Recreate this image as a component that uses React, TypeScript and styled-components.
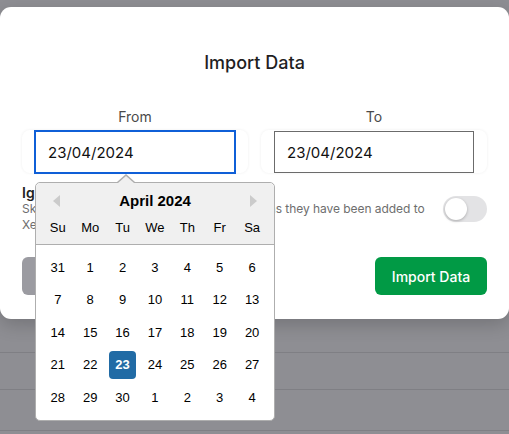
import styled, { createGlobalStyle } from "styled-components";

const GlobalStyle = createGlobalStyle`
  html, body {
    margin: 0;
    padding: 0;
  }
  body {
    background: #8e8e93;
    font-family: Inter, "Noto Sans", sans-serif;
  }
`;

const WEEKDAYS = ["Su", "Mo", "Tu", "We", "Th", "Fr", "Sa"];

const WEEKS: number[][] = [
  [31, 1, 2, 3, 4, 5, 6],
  [7, 8, 9, 10, 11, 12, 13],
  [14, 15, 16, 17, 18, 19, 20],
  [21, 22, 23, 24, 25, 26, 27],
  [28, 29, 30, 1, 2, 3, 4],
];

const SELECTED_ROW = 3;
const SELECTED_DAY = 23;

const DatePicker = () => (
  <Popup>
    <PickerHeader>
      <NavRow>
        <NavArrow $dir="left" />
        <MonthTitle>April 2024</MonthTitle>
        <NavArrow $dir="right" />
      </NavRow>
      <DayGrid>
        {WEEKDAYS.map((d) => (
          <DayName key={d}>{d}</DayName>
        ))}
      </DayGrid>
    </PickerHeader>
    <MonthBody>
      {WEEKS.map((week, wi) =>
        week.map((day, di) => (
          <Day
            key={`${wi}-${di}`}
            $selected={wi === SELECTED_ROW && day === SELECTED_DAY}
          >
            {day}
          </Day>
        ))
      )}
    </MonthBody>
  </Popup>
);

export default function App() {
  return (
    <>
      <GlobalStyle />
      <Page>
        <Backdrop>
          <BackdropRow $h={36} />
          <BackdropRow $h={36} />
          <BackdropRow $h={40} />
        </Backdrop>

        <Modal>
          <Title>Import Data</Title>

          <DateRow>
            <Field>
              <FieldLabel>From</FieldLabel>
              <FieldCard>
                <InputWrap>
                  <DateInput $focused readOnly value="23/04/2024" />
                  <DatePicker />
                </InputWrap>
              </FieldCard>
            </Field>
            <Field>
              <FieldLabel>To</FieldLabel>
              <FieldCard>
                <InputWrap>
                  <DateInput readOnly value="23/04/2024" />
                </InputWrap>
              </FieldCard>
            </Field>
          </DateRow>

          <SettingRow>
            <SettingText>
              <SettingTitle>Ignore duplicate transactions</SettingTitle>
              <SettingDesc>
                Skip all duplicate transactions in this import as they have been added to Xero
                previously.
              </SettingDesc>
            </SettingText>
            <Toggle>
              <Knob />
            </Toggle>
          </SettingRow>

          <ButtonRow>
            <Button $variant="cancel">Cancel</Button>
            <Button $variant="primary">Import Data</Button>
          </ButtonRow>
        </Modal>
      </Page>
    </>
  );
}

const Page = styled.div`
  position: relative;
  width: 509px;
  height: 434px;
  overflow: hidden;
  background: #8e8e93;
`;

const Backdrop = styled.div`
  padding-top: 316px;
`;

const BackdropRow = styled.div<{ $h: number }>`
  height: ${({ $h }) => $h}px;
  border-bottom: 1px solid #7f7f84;
`;

const Modal = styled.div`
  position: absolute;
  top: 7px;
  left: 0;
  width: 509px;
  box-sizing: border-box;
  padding: 44px 22px 24px;
  background: #ffffff;
  border-radius: 11px;
  box-shadow: 0 6px 18px rgba(0, 0, 0, 0.18);
`;

const Title = styled.h2`
  margin: 0;
  text-align: center;
  font-size: 18px;
  line-height: 24px;
  font-weight: 500;
  color: #1f1f1f;
`;

const DateRow = styled.div`
  display: grid;
  grid-template-columns: 1fr 1fr;
  column-gap: 13px;
  margin-top: 32px;
`;

const Field = styled.div`
  display: flex;
  flex-direction: column;
  align-items: stretch;
`;

const FieldLabel = styled.div`
  text-align: center;
  font-size: 14px;
  line-height: 20px;
  color: #4a4a4a;
  margin-bottom: 3px;
`;

const FieldCard = styled.div`
  height: 43px;
  display: flex;
  align-items: flex-end;
  justify-content: center;
  background: #ffffff;
  border-radius: 8px;
  box-shadow: 0 0 3px rgba(0, 0, 0, 0.07);
`;

const InputWrap = styled.div`
  position: relative;
  display: flex;
`;

const DateInput = styled.input<{ $focused?: boolean }>`
  width: 200px;
  height: 42px;
  box-sizing: border-box;
  padding: 0 12px;
  margin: 0;
  font-family: Inter, "Noto Sans", sans-serif;
  font-size: 15px;
  color: #111111;
  background: #ffffff;
  border: 1px solid ${({ $focused }) => ($focused ? "#0f5fd7" : "#6b6b6b")};
  outline: ${({ $focused }) => ($focused ? "1px solid #0f5fd7" : "none")};
  border-radius: 0;
`;

const SettingRow = styled.div`
  display: flex;
  align-items: center;
  gap: 12px;
  margin-top: 11px;
`;

const SettingText = styled.div`
  flex: 1;
  min-width: 0;
`;

const SettingTitle = styled.div`
  font-size: 14px;
  line-height: 17px;
  font-weight: 600;
  color: #222222;
`;

const SettingDesc = styled.div`
  font-size: 12px;
  line-height: 16px;
  letter-spacing: -0.05px;
  color: #6e6e6e;
`;

const Toggle = styled.div`
  width: 44px;
  height: 26px;
  flex-shrink: 0;
  box-sizing: border-box;
  padding: 2px;
  border-radius: 13px;
  background: #e3e3e5;
  display: flex;
  align-items: center;
`;

const Knob = styled.div`
  width: 22px;
  height: 22px;
  border-radius: 50%;
  background: #ffffff;
  box-shadow: 0 1px 3px rgba(0, 0, 0, 0.25);
`;

const ButtonRow = styled.div`
  display: flex;
  justify-content: space-between;
  margin-top: 24px;
`;

const Button = styled.button<{ $variant: "cancel" | "primary" }>`
  height: 38px;
  min-width: ${({ $variant }) => ($variant === "primary" ? "112px" : "96px")};
  padding: 0 16px;
  border: none;
  border-radius: 6px;
  font-family: Inter, "Noto Sans", sans-serif;
  font-size: 14px;
  font-weight: 500;
  color: #ffffff;
  background: ${({ $variant }) => ($variant === "primary" ? "#019a45" : "#9b9ba1")};
`;

/* date picker popup */

const Popup = styled.div`
  position: absolute;
  top: calc(100% + 9px);
  left: 0;
  width: 240px;
  box-sizing: border-box;
  background: #ffffff;
  border: 1px solid #aeaeae;
  border-radius: 5px;
  font-family: "Liberation Sans", Arial, sans-serif;
  color: #000000;
  z-index: 2;

  &::before,
  &::after {
    content: "";
    position: absolute;
    width: 0;
    height: 0;
    border-style: solid;
    border-color: transparent;
  }
  &::before {
    top: -9px;
    left: 81px;
    border-width: 0 9px 8px 9px;
    border-bottom-color: #aeaeae;
  }
  &::after {
    top: -7px;
    left: 82px;
    border-width: 0 8px 7px 8px;
    border-bottom-color: #f0f0f0;
  }
`;

const PickerHeader = styled.div`
  background: #f0f0f0;
  border-bottom: 1px solid #aeaeae;
  border-radius: 5px 5px 0 0;
  padding: 7px 5.6px 6px;
`;

const NavRow = styled.div`
  display: flex;
  align-items: center;
  justify-content: space-between;
  height: 22px;
  padding: 0 11px;
`;

const NavArrow = styled.span<{ $dir: "left" | "right" }>`
  width: 0;
  height: 0;
  border-top: 6.5px solid transparent;
  border-bottom: 6.5px solid transparent;
  ${({ $dir }) =>
    $dir === "left" ? "border-right: 7px solid #cbcbcb;" : "border-left: 7px solid #cbcbcb;"}
`;

const MonthTitle = styled.div`
  font-size: 15px;
  font-weight: 700;
  line-height: 22px;
`;

const DayGrid = styled.div`
  display: grid;
  grid-template-columns: repeat(7, 32.4px);
  margin-top: 6px;
`;

const DayName = styled.div`
  text-align: center;
  font-size: 13px;
  line-height: 20px;
`;

const MonthBody = styled.div`
  display: grid;
  grid-template-columns: repeat(7, 32.4px);
  grid-auto-rows: 32.5px;
  padding: 6px 5.6px 6.5px;
  align-items: center;
  justify-items: center;
`;

const Day = styled.div<{ $selected?: boolean }>`
  width: 27px;
  height: 28px;
  display: flex;
  align-items: center;
  justify-content: center;
  font-size: 13px;
  border-radius: 4px;
  font-weight: ${({ $selected }) => ($selected ? 700 : 400)};
  color: ${({ $selected }) => ($selected ? "#ffffff" : "#000000")};
  background: ${({ $selected }) => ($selected ? "#216ba5" : "transparent")};
`;
